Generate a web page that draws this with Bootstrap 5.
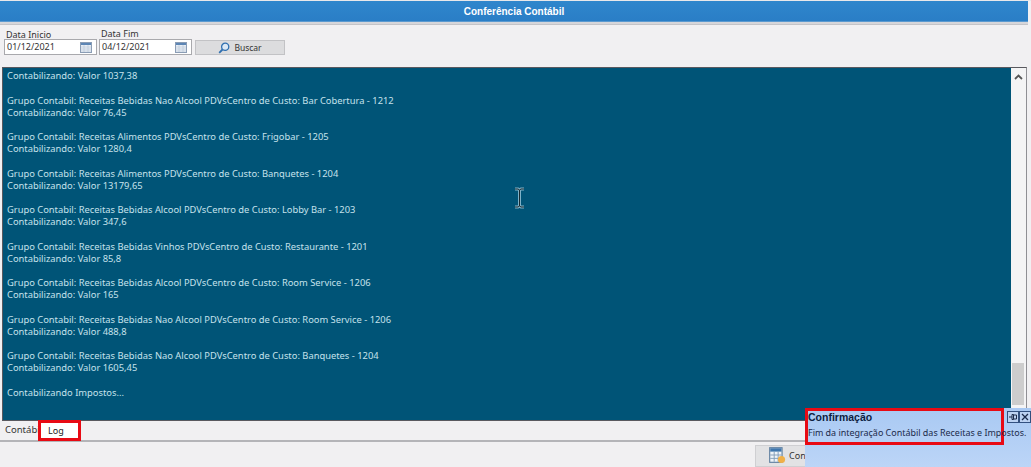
<!doctype html>
<html lang="pt">
<head>
<meta charset="utf-8">
<title>Conferência Contábil</title>
<link rel="stylesheet" href="https://cdn.jsdelivr.net/npm/bootstrap@5.3.0/dist/css/bootstrap.min.css">
<style>
html,body{height:467px;overflow:hidden}
body{background:#f1f0f2;font-family:"Noto Sans","Liberation Sans",sans-serif;font-size:9.5px;color:#333;position:relative;width:1031px}
.top-gap{height:1px;background:#e8e8ea}
.page-col{width:1028px}
.titlebar{height:21px;background:linear-gradient(#2f86cc,#2a7ec6);color:#fff;font-family:"Liberation Sans",sans-serif;font-weight:700;font-size:10px;line-height:22px;text-align:center;border-bottom:1px solid #5b9ad0}
.title-rule{height:3px;background:#d6d6da;border-bottom:1px solid #c4c4c8;background-clip:padding-box}
.toolbar{height:42px;padding:4px 0 0 4px;gap:2px}
.fld-label{line-height:10px;height:10px;margin-left:2px;font-size:9px}
.fld-low{margin-top:1px;margin-bottom:-1px}
.date-box{width:93px;height:16px;background:#fff;border:1px solid #a9a9ad;line-height:14px;padding-left:2px;font-size:9px;color:#333}
.date-box svg{width:12px;height:11px}
.search-btn{width:90px;height:15px;margin:11px 0 0 1px;background:#dcdcde;border:1px solid #c2c2c5;font-size:8.5px;line-height:13px;color:#333;border-radius:0;padding:0;gap:4px}
.log-wrap{height:354px;margin:0 1px 0 2px;border:1px solid #59595f;border-right-color:#8f8f94}
.log-text{background:#005477;color:#c6e2ec;font-size:9.35px;line-height:12.17px;padding:2.3px 0 0 4px;white-space:pre;overflow:hidden}
.scroll-track{width:15px;background:#f4f4f5;padding:0 2px 0 1px}
.scroll-arrow{height:17px}
.scroll-thumb{height:42px;margin-bottom:15px;background:#cdcdcd}
.tabs{height:21px;border-bottom:2px solid #b4b4b8;padding-left:5px;font-size:9.5px;line-height:18px}
.tab-log{position:absolute;left:38px;top:420px;width:43px;height:21px;background:#fff;border:3px solid #e80a14;line-height:16px;padding-left:7px;font-size:9px;color:#222}
.conf-btn{position:absolute;left:755px;top:445px;width:100px;height:22px;background:#e2e2e4;border:1px solid #cfcfd2;border-radius:0;font-size:9px;line-height:20px;padding:0 0 0 12px;text-align:left;color:#333;white-space:nowrap}
.conf-btn svg{width:18px;height:18px;vertical-align:-5px;margin-right:3px}
.toast-box{position:absolute;left:805px;top:408px;width:226px;height:59px;background:linear-gradient(#a9c9f3,#bcd5f7);color:#111}
.toast-frame{position:absolute;left:0;top:0;width:199px;height:37px;border:3px solid #e80a14}
.toast-title{font-weight:700;font-size:10.5px;line-height:13px;color:#0c1d40;font-family:"Liberation Sans",sans-serif}
.toast-msg{font-size:8.95px;line-height:13px;margin-top:2px;white-space:nowrap;color:#1b2a4a}
.toast-ctl{position:absolute;top:3px;width:12px;height:12px;border:1px solid #32507f;background:#bcd2f2}
.toast-ctl svg{display:block;width:10px;height:10px}
.ctl-pin{left:202px}
.ctl-close{left:214px}
.cursor-i{position:absolute;left:513px;top:187px;width:13px;height:22px}
</style>
</head>
<body>
<div class="top-gap"></div>
<div class="page-col">
<div class="titlebar">Conferência Contábil</div>
<div class="title-rule"></div>
<div class="toolbar d-flex">
  <div>
    <div class="fld-label fld-low">Data Inicio</div>
    <div class="date-box d-flex justify-content-between align-items-center"><span>01/12/2021</span><svg viewBox="0 0 12 11" class="me-1"><rect x=".5" y=".5" width="11" height="10" fill="#e8eef5" stroke="#8b9db5"/><rect x="1" y="1" width="10" height="2" fill="#5d86b5"/><path d="M1 5h10M1 7h10M1 9h10M4 3v7M8 3v7" stroke="#b6c4d4" stroke-width=".6"/></svg></div>
  </div>
  <div>
    <div class="fld-label">Data Fim</div>
    <div class="date-box d-flex justify-content-between align-items-center"><span>04/12/2021</span><svg viewBox="0 0 12 11" class="me-1"><rect x=".5" y=".5" width="11" height="10" fill="#e8eef5" stroke="#8b9db5"/><rect x="1" y="1" width="10" height="2" fill="#5d86b5"/><path d="M1 5h10M1 7h10M1 9h10M4 3v7M8 3v7" stroke="#b6c4d4" stroke-width=".6"/></svg></div>
  </div>
  <button type="button" class="btn search-btn d-flex justify-content-center align-items-center"><svg width="12" height="12" viewBox="0 0 12 12"><circle cx="7.2" cy="4.8" r="3.6" fill="#dbe8f5" stroke="#2f6fb0" stroke-width="1.3"/><path d="M4.500 7.500 1.200 10.800" stroke="#2f6fb0" stroke-width="1.800"/></svg><span>Buscar</span></button>
</div>
<div class="log-wrap d-flex">
  <div class="log-text flex-grow-1">Contabilizando: Valor 1037,38

Grupo Contabil: Receitas Bebidas Nao Alcool PDVsCentro de Custo: Bar Cobertura - 1212
Contabilizando: Valor 76,45

Grupo Contabil: Receitas Alimentos PDVsCentro de Custo: Frigobar - 1205
Contabilizando: Valor 1280,4

Grupo Contabil: Receitas Alimentos PDVsCentro de Custo: Banquetes - 1204
Contabilizando: Valor 13179,65

Grupo Contabil: Receitas Bebidas Alcool PDVsCentro de Custo: Lobby Bar - 1203
Contabilizando: Valor 347,6

Grupo Contabil: Receitas Bebidas Vinhos PDVsCentro de Custo: Restaurante - 1201
Contabilizando: Valor 85,8

Grupo Contabil: Receitas Bebidas Alcool PDVsCentro de Custo: Room Service - 1206
Contabilizando: Valor 165

Grupo Contabil: Receitas Bebidas Nao Alcool PDVsCentro de Custo: Room Service - 1206
Contabilizando: Valor 488,8

Grupo Contabil: Receitas Bebidas Nao Alcool PDVsCentro de Custo: Banquetes - 1204
Contabilizando: Valor 1605,45

Contabilizando Impostos...</div>
  <div class="scroll-track d-flex flex-column">
    <div class="scroll-arrow d-flex justify-content-center align-items-center"><svg width="9" height="6" viewBox="0 0 9 6"><path d="M1 5 4.500 1.500 8 5" fill="none" stroke="#555" stroke-width="1.800"/></svg></div>
    <div class="flex-grow-1"></div>
    <div class="scroll-thumb"></div>
  </div>
</div>
<div class="tabs">Contábil</div>
</div>
<div class="tab-log">Log</div>
<button type="button" class="btn conf-btn"><svg viewBox="0 0 16 16"><rect x="1.500" y="1.500" width="11" height="13" fill="#eef3f8" stroke="#5f7f9f"/><rect x="2" y="2" width="10" height="3" fill="#3f76ad"/><path d="M2 8h10M2 11h10M5.500 5v9M9 5v9" stroke="#7f9ab5" stroke-width=".8"/><circle cx="12" cy="12" r="3.200" fill="#f0b048"/></svg>Confirmar</button>
<svg class="cursor-i" viewBox="0 0 13 22"><path d="M2 2h3l1.500 1L8 2h3M6.500 3v16M2 20h3l1.500-1L8 20h3" fill="none" stroke="#7fb2c8" stroke-width="3"/><path d="M2 2h3l1.500 1L8 2h3M6.500 3v16M2 20h3l1.500-1L8 20h3" fill="none" stroke="#1a2a30" stroke-width="1"/></svg>
<div class="toast-box">
  <div class="toast-frame">
    <div class="toast-title">Confirmação</div>
    <div class="toast-msg">Fim da integração Contábil das Receitas e Impostos.</div>
  </div>
  <div class="toast-ctl ctl-pin"><svg viewBox="0 0 10 10"><path d="M1 5h3M4 5V2.500h1.500v5H4zM5.500 3h3v4h-3" fill="none" stroke="#1b2a4a"/></svg></div>
  <div class="toast-ctl ctl-close"><svg viewBox="0 0 10 10"><path d="M2 2l6 6M8 2l-6 6" stroke="#1b2a4a" stroke-width="1.300"/></svg></div>
</div>
<script src="https://cdn.jsdelivr.net/npm/bootstrap@5.3.0/dist/js/bootstrap.bundle.min.js"></script>
</body>
</html>
